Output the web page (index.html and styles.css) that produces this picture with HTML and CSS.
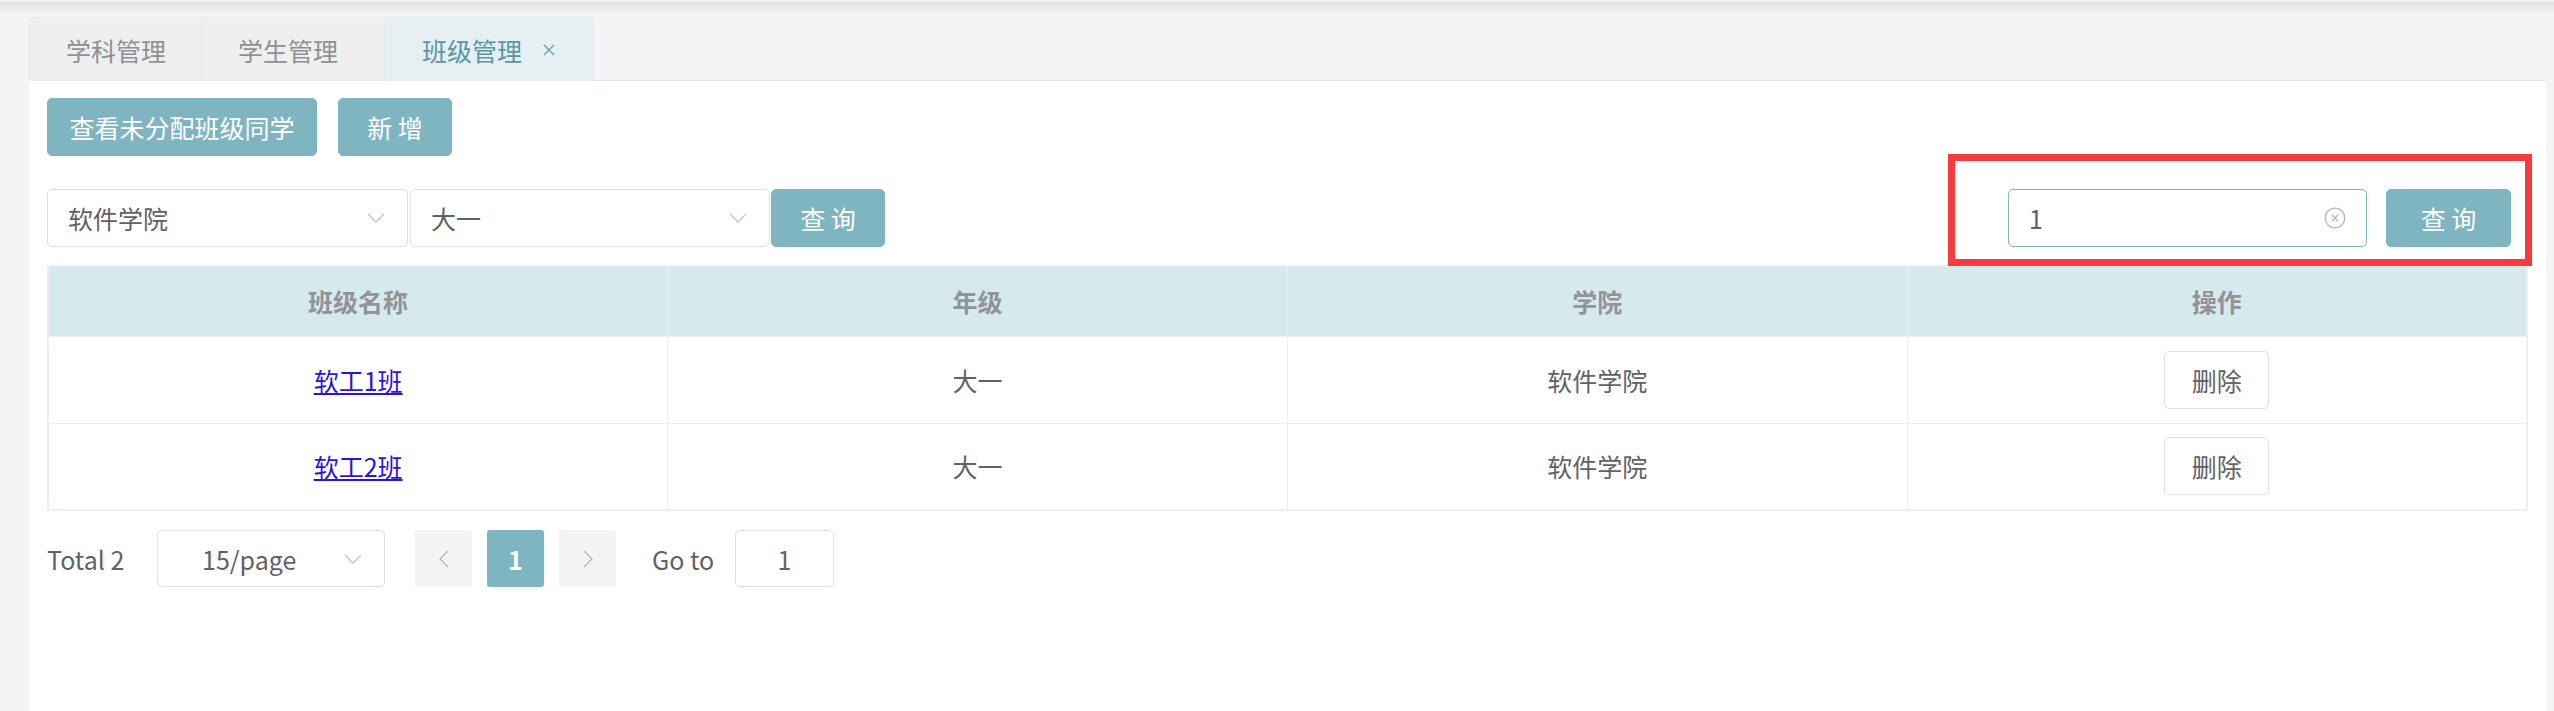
FILE: index.html
```html
<!DOCTYPE html>
<html lang="zh-CN">
<head>
<meta charset="utf-8">
<title>班级管理</title>
<link rel="stylesheet" href="styles.css">
</head>
<body>
<div class="page">
  <div class="tabs">
    <div class="tab-group">
      <div class="tab">学科管理</div>
      <div class="tab tab-b">学生管理</div>
      <div class="tab active">班级管理<svg class="tab-close" width="12" height="12" viewBox="0 0 12 12"><path d="M1 1 L11 11 M11 1 L1 11" stroke="#6f9ea9" stroke-width="1.4" fill="none"/></svg></div>
    </div>
  </div>
  <div class="panel">
    <div class="actions">
      <button class="btn primary btn-unassigned">查看未分配班级同学</button>
      <button class="btn primary btn-add">新 增</button>
    </div>
    <div class="filters">
      <div class="filter-left">
        <div class="select select-college">
          <span class="select-text">软件学院</span>
          <svg class="chev" width="18" height="10" viewBox="0 0 18 10"><polyline points="1,1 9,9 17,1" fill="none" stroke="#c0c4cc" stroke-width="1.3"/></svg>
        </div>
        <div class="select select-grade">
          <span class="select-text">大一</span>
          <svg class="chev" width="18" height="10" viewBox="0 0 18 10"><polyline points="1,1 9,9 17,1" fill="none" stroke="#c0c4cc" stroke-width="1.3"/></svg>
        </div>
        <button class="btn primary btn-query">查 询</button>
      </div>
      <div class="filter-right">
        <div class="search-input">
          <span class="search-text">1</span>
          <svg class="clear" width="22" height="22" viewBox="0 0 22 22"><circle cx="11" cy="11" r="9.8" fill="none" stroke="#b4b7be" stroke-width="1.3"/><path d="M7.8 7.8 L14.2 14.2 M14.2 7.8 L7.8 14.2" stroke="#b4b7be" stroke-width="1.3"/></svg>
        </div>
        <button class="btn primary btn-search">查 询</button>
        <div class="annotation"></div>
      </div>
    </div>
    <table class="grid">
      <thead>
        <tr><th>班级名称</th><th>年级</th><th>学院</th><th>操作</th></tr>
      </thead>
      <tbody>
        <tr>
          <td><a href="#" class="class-link">软工1班</a></td>
          <td>大一</td>
          <td>软件学院</td>
          <td><button class="btn plain btn-del">删除</button></td>
        </tr>
        <tr>
          <td><a href="#" class="class-link">软工2班</a></td>
          <td>大一</td>
          <td>软件学院</td>
          <td><button class="btn plain btn-del">删除</button></td>
        </tr>
      </tbody>
    </table>
    <div class="pager">
      <span class="pager-total">Total 2</span>
      <div class="pager-sizes">
        <span class="sizes-text">15/page</span>
        <svg class="chev" width="18" height="10" viewBox="0 0 18 10"><polyline points="1,1 9,9 17,1" fill="none" stroke="#c0c4cc" stroke-width="1.3"/></svg>
      </div>
      <div class="pager-btn pager-prev"><svg width="10" height="18" viewBox="0 0 10 18"><polyline points="9,1 1,9 9,17" fill="none" stroke="#b0b3ba" stroke-width="1.3"/></svg></div>
      <div class="pager-btn pager-num">1</div>
      <div class="pager-btn pager-next"><svg width="10" height="18" viewBox="0 0 10 18"><polyline points="1,1 9,9 1,17" fill="none" stroke="#b0b3ba" stroke-width="1.3"/></svg></div>
      <span class="pager-goto">Go to</span>
      <div class="pager-input">1</div>
    </div>
  </div>
</div>
</body>
</html>
```

FILE: styles.css
```css
* { box-sizing: border-box; }

html, body {
  margin: 0;
  height: 100%;
}

body {
  background: linear-gradient(to bottom, #f6f6f6 0, #e2e2e2 2px, #f4f4f4 14px) no-repeat, #f4f4f4;
  font-family: "Noto Sans CJK SC", "Microsoft YaHei", sans-serif;
  font-size: 25px;
  color: #606266;
}

.page {
  min-height: 100vh;
  display: flex;
  flex-direction: column;
  padding: 17px 8px 0 29px;
}

/* tabs */
.tabs {
  display: flex;
  border-bottom: 1px solid #e4e7ed;
  height: 64px;
}

.tab-group {
  display: flex;
  border: 1px solid #e4e7ed;
  border-bottom: none;
  border-radius: 5px 5px 0 0;
  overflow: hidden;
  height: 64px;
}

.tab {
  display: flex;
  align-items: center;
  height: 63px;
  padding: 0 36px;
  background: #efefef;
  color: #8f9095;
  border-left: 1px solid #e4e7ed;
  white-space: nowrap;
}

.tab:first-child { border-left: none; }

.tab-b { padding: 0 46px 0 35px; }

.tab.active {
  background: #e6f0f3;
  color: #5b96a4;
  padding: 0 38px 0 37px;
}

.tab-close {
  display: block;
  margin-left: 21px;
}

/* panel */
.panel {
  flex: 1;
  background: #fff;
  padding: 17px 18px 0 18px;
}

.btn {
  font-family: inherit;
  font-size: 25px;
  height: 58px;
  border-radius: 5px;
  display: inline-flex;
  align-items: center;
  justify-content: center;
  white-space: pre;
  cursor: pointer;
  padding: 0;
}

.btn.primary {
  background: #7fb5c0;
  border: 1px solid #7fb5c0;
  color: #fff;
}

.btn.plain {
  background: #fff;
  border: 1px solid #dcdfe6;
  color: #606266;
}

.actions {
  display: flex;
  gap: 21px;
}

.btn-unassigned { width: 270px; }
.btn-add { width: 114px; }

.filters {
  margin-top: 33px;
  display: flex;
  justify-content: space-between;
  align-items: center;
  height: 58px;
}

.filter-left {
  display: flex;
  align-items: center;
}

.select {
  height: 58px;
  border: 1px solid #dcdfe6;
  border-radius: 5px;
  display: flex;
  align-items: center;
  justify-content: space-between;
  padding: 0 22px 0 20px;
  background: #fff;
}

.select-college { width: 361px; }
.select-grade { width: 360px; margin-left: 2px; }

.chev { display: block; }

.btn-query { width: 114px; margin-left: 1px; }

.filter-right {
  position: relative;
  display: flex;
  align-items: center;
  margin-right: 17px;
}

.search-input {
  width: 359px;
  height: 58px;
  border: 1px solid #80b5c1;
  border-radius: 5px;
  display: flex;
  align-items: center;
  justify-content: space-between;
  padding: 0 20px 0 20px;
}

.search-text { color: #606266; }

.clear { display: block; }

.btn-search { width: 125px; margin-left: 19px; }

.annotation {
  position: absolute;
  top: -35px;
  left: -60px;
  right: -21px;
  bottom: -19px;
  border: 7px solid #f53b3b;
  pointer-events: none;
}

/* table */
.grid {
  margin-top: 18px;
  width: 100%;
  table-layout: fixed;
  border-collapse: collapse;
  border: 2px solid #ebeef5;
}

.grid th,
.grid td {
  text-align: center;
  border-right: 1px solid #ebeef5;
  border-bottom: 1px solid #ebeef5;
  padding: 0;
}

.grid th {
  height: 70px;
  background: #d6e9ed;
  color: #909399;
  font-weight: bold;
}

.grid td {
  height: 87px;
  color: #606266;
}

.class-link {
  color: #2b12e4;
  text-decoration: underline;
}

.btn-del { width: 105px; }

/* pager */
.pager {
  margin-top: 19px;
  display: flex;
  align-items: center;
  height: 57px;
}

.pager-total { width: 79px; white-space: nowrap; }

.pager-sizes {
  margin-left: 31px;
  width: 228px;
  height: 57px;
  border: 1px solid #dcdfe6;
  border-radius: 5px;
  display: flex;
  align-items: center;
  justify-content: space-between;
  padding: 0 22px 0 44px;
}

.pager-btn {
  width: 57px;
  height: 57px;
  border-radius: 3px;
  background: #f4f4f5;
  display: flex;
  align-items: center;
  justify-content: center;
  margin-left: 15px;
}

.pager-prev { margin-left: 30px; }

.pager-num {
  background: #7fb5c0;
  color: #fff;
  font-weight: bold;
}

.pager-goto {
  margin-left: 36px;
  width: 66px;
  white-space: nowrap;
}

.pager-input {
  margin-left: 17px;
  width: 99px;
  height: 57px;
  border: 1px solid #dcdfe6;
  border-radius: 5px;
  display: flex;
  align-items: center;
  justify-content: center;
}
```
